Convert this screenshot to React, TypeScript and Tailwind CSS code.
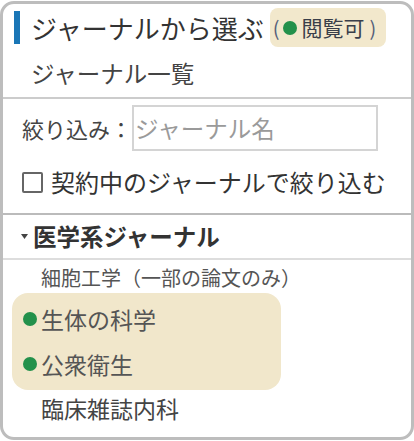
import React from "react";

export default function App() {
  const font = { fontFamily: '"Noto Sans CJK JP", "Noto Sans", sans-serif' };
  return (
    <div className="w-[414px] h-[441px] bg-white" style={font}>
      <div className="mt-px h-[439px] w-[414px] border-[3px] border-[#bdbdbd] rounded-[14px] flex flex-col overflow-hidden text-[#333]">
        {/* Section 1 */}
        <div className="h-[93px] flex flex-col">
          <div className="mt-[4px] h-[39px] flex items-center">
            <div className="ml-[11px] w-[6px] h-[33px] bg-[#1a76b6]" />
            <span className="ml-[11px] text-[26px] leading-[39px] text-[#333]">ジャーナルから選ぶ</span>
            <div className="ml-[6px] h-[39px] pl-[3px] pr-[10px] rounded-[8px] bg-[#f2e8cc] flex items-center">
              <span className="text-[20px] leading-[39px] text-[#55607a]">(</span>
              <span className="ml-[4px] w-[14px] h-[14px] rounded-full bg-[#23914b]" />
              <span className="ml-[4px] text-[21px] leading-[39px] text-[#3a3f4a]">閲覧可</span>
              <span className="ml-[5px] text-[20px] leading-[39px] text-[#55607a]">)</span>
            </div>
          </div>
          <div className="mt-[10px] h-[32px] pl-[28px] text-[23.5px] leading-[32px] text-[#444]">ジャーナル一覧</div>
        </div>
        <div className="h-[2px] bg-[#cccccc]" />
        {/* Section 2 */}
        <div className="h-[114px] flex flex-col">
          <div className="mt-[6px] h-[46px] flex items-center">
            <span className="ml-[19px] w-[110px] text-[22px] leading-[46px] text-[#444]">絞り込み：</span>
            <div className="w-[246px] h-[46px] border-2 border-[#d4d4d4] flex items-center">
              <span className="ml-[1px] text-[23.5px] leading-[42px] text-[#9a9a9a]">ジャーナル名</span>
            </div>
          </div>
          <div className="mt-[17px] h-[28px] flex items-center">
            <div className="ml-[19px] w-[21px] h-[21px] border-2 border-[#666] rounded-[2px] bg-white" />
            <span className="ml-[8px] text-[24px] leading-[28px] text-[#333]">契約中のジャーナルで絞り込む</span>
          </div>
        </div>
        <div className="h-[2px] bg-[#bbbbbb]" />
        {/* Section 3 heading */}
        <div className="h-[43px] flex items-center">
          <svg className="ml-[18px]" width="7" height="5" viewBox="0 0 7 5">
            <path d="M0 0 L7 0 L3.5 5 Z" fill="#444" />
          </svg>
          <span className="ml-[5px] text-[23.5px] font-bold leading-[43px] text-[#333]">医学系ジャーナル</span>
        </div>
        <div className="h-[2px] bg-[#dddddd]" />
        {/* List */}
        <div className="flex flex-col">
          <div className="mt-[3px] h-[30px] pl-[38px] text-[20px] leading-[30px] text-[#555]">細胞工学（一部の論文のみ）</div>
          <div className="ml-[9px] w-[269px] h-[97px] rounded-[16px] bg-[#f1e7cb] flex flex-col">
            <div className="mt-[9px] h-[34px] flex items-center">
              <span className="ml-[11px] w-[14px] h-[14px] rounded-full bg-[#23914b]" />
              <span className="ml-[4px] text-[23px] leading-[34px] text-[#555]">生体の科学</span>
            </div>
            <div className="mt-[11px] h-[34px] flex items-center">
              <span className="ml-[11px] w-[14px] h-[14px] rounded-full bg-[#23914b]" />
              <span className="ml-[4px] text-[23px] leading-[34px] text-[#555]">公衆衛生</span>
            </div>
          </div>
          <div className="mt-[2px] h-[32px] pl-[38px] text-[23px] leading-[32px] text-[#444]">臨床雑誌内科</div>
        </div>
      </div>
    </div>
  );
}
